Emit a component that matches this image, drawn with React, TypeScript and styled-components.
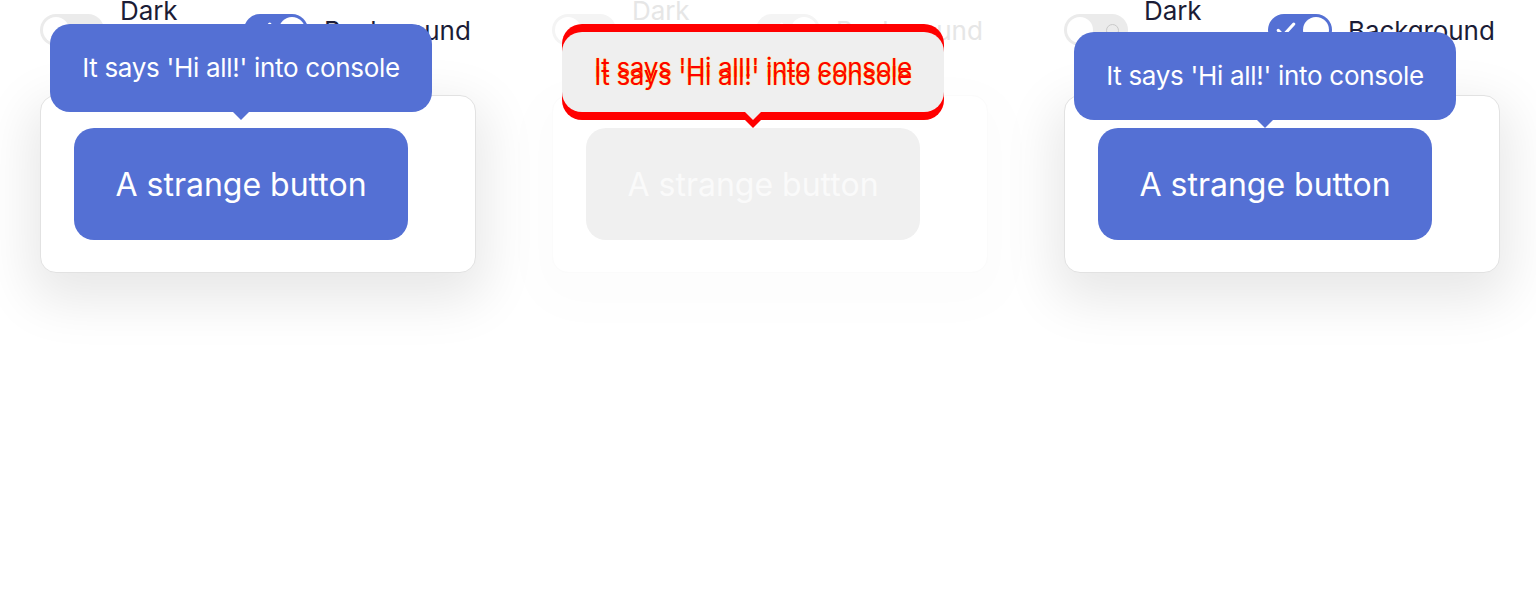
import React from "react";
import styled, { createGlobalStyle, css } from "styled-components";

const GlobalStyle = createGlobalStyle`
  html, body { margin: 0; padding: 0; background: #ffffff; }
  body { font-family: Inter, "Noto Sans", sans-serif; overflow: hidden; }
`;

const BLUE = "#5470d4";

const Page = styled.div`
  display: grid;
  grid-template-columns: repeat(3, 512px);
  width: 1536px;
  height: 600px;
`;

const Column = styled.div`
  position: relative;
  padding: 0 0 0 40px;
`;

const Controls = styled.div`
  display: flex;
  align-items: center;
  gap: 24px;
  margin-top: -9px;
`;

const Control = styled.label`
  display: flex;
  align-items: center;
  gap: 16px;
`;

const Label = styled.span<{ $faded?: boolean; $w?: number }>`
  font-size: 26px;
  line-height: 39px;
  letter-spacing: -0.1px;
  color: ${(p) => (p.$faded ? "#e6e6e6" : "#1b1c36")};
  ${(p) => p.$w && css`width: ${p.$w}px;`}
`;

const Track = styled.span<{ $on?: boolean; $faded?: boolean }>`
  position: relative;
  display: flex;
  align-items: center;
  justify-content: space-between;
  box-sizing: border-box;
  width: 64px;
  height: 32px;
  padding: 0 3px;
  border-radius: 16px;
  flex-shrink: 0;
  background: ${(p) => (p.$faded ? "#f4f4f4" : p.$on ? BLUE : "#ebebeb")};
`;

const Knob = styled.span`
  width: 26px;
  height: 26px;
  border-radius: 50%;
  background: #ffffff;
`;

const Ring = styled.span<{ $faded?: boolean }>`
  width: 11px;
  height: 11px;
  margin-right: 6px;
  border-radius: 50%;
  border: 1.5px solid ${(p) => (p.$faded ? "#ededed" : "#c9c9c9")};
`;

const CheckIcon = styled.svg`
  width: 22px;
  height: 22px;
  margin-left: 4px;
`;

const Switch: React.FC<{ on?: boolean; faded?: boolean }> = ({ on, faded }) => (
  <Track $on={on} $faded={faded}>
    {on ? (
      <>
        <CheckIcon viewBox="0 0 24 24" fill="none">
          <path d="M3.5 12.5l5.5 5.5L20.5 5.5" stroke="#ffffff" strokeWidth="3.4" strokeLinecap="round" strokeLinejoin="round" />
        </CheckIcon>
        <Knob />
      </>
    ) : (
      <>
        <Knob />
        <Ring $faded={faded} />
      </>
    )}
  </Track>
);

const Panel = styled.div<{ $faded?: boolean }>`
  box-sizing: border-box;
  width: 436px;
  margin-top: 26px;
  padding: 32px 33px;
  border-radius: 16px;
  background: #ffffff;
  border: 1px solid ${(p) => (p.$faded ? "#fbfbfb" : "#e2e2e2")};
  box-shadow: ${(p) =>
    p.$faded
      ? "0 16px 48px 24px rgba(0,0,0,0.012)"
      : "0 18px 52px 10px rgba(0,0,0,0.095)"};
`;

const Anchor = styled.div`
  position: relative;
  width: 334px;
`;

const StrangeButton = styled.button<{ $faded?: boolean }>`
  display: flex;
  align-items: center;
  justify-content: center;
  width: 334px;
  height: 112px;
  border: none;
  border-radius: 20px;
  background: ${(p) => (p.$faded ? "#f0f0f0" : BLUE)};
  color: ${(p) => (p.$faded ? "#fafafa" : "#ffffff")};
  font-family: Inter, "Noto Sans", sans-serif;
  font-size: 32px;
  letter-spacing: 0;
  cursor: pointer;
`;

const Tooltip = styled.div<{ $gap: number; $bg?: string; $h?: number }>`
  position: absolute;
  left: 50%;
  bottom: calc(100% + ${(p) => p.$gap}px);
  transform: translateX(-50%);
  box-sizing: border-box;
  width: 382px;
  height: ${(p) => p.$h ?? 88}px;
  border-radius: 20px;
  background: ${(p) => p.$bg ?? BLUE};
  color: #ffffff;
  font-size: 26px;
  line-height: ${(p) => p.$h ?? 88}px;
  text-align: center;
  white-space: nowrap;
  letter-spacing: -0.3px;
  &::after {
    content: "";
    position: absolute;
    left: 50%;
    top: 100%;
    margin-left: -8px;
    border: 8px solid transparent;
    border-top-color: ${(p) => p.$bg ?? BLUE};
    border-bottom: 0;
  }
`;

const DiffText = styled.span<{ $dy: number }>`
  position: absolute;
  left: 0;
  right: 0;
  top: ${(p) => p.$dy}px;
  line-height: 88px;
  color: #ff0000;
  text-shadow: 0 0 1px #ffee00;
`;

const Demo: React.FC<{ gap: number }> = ({ gap }) => (
  <Column>
    <Controls>
      <Control>
        <Switch />
        <Label $w={100}>Dark mode</Label>
      </Control>
      <Control>
        <Switch on />
        <Label>Background</Label>
      </Control>
    </Controls>
    <Panel>
      <Anchor>
        <StrangeButton>A strange button</StrangeButton>
        <Tooltip $gap={gap}>It says 'Hi all!' into console</Tooltip>
      </Anchor>
    </Panel>
  </Column>
);

const DiffDemo: React.FC = () => (
  <Column>
    <Controls>
      <Control>
        <Switch faded />
        <Label $faded $w={100}>Dark mode</Label>
      </Control>
      <Control>
        <Switch on faded />
        <Label $faded>Background</Label>
      </Control>
    </Controls>
    <Panel $faded>
      <Anchor>
        <StrangeButton $faded>A strange button</StrangeButton>
        <Tooltip $gap={8} $bg="#ff0000" $h={96} />
        <Tooltip $gap={16} $bg="#efefef" $h={80}>
          <DiffText $dy={-8}>It says 'Hi all!' into console</DiffText>
          <DiffText $dy={0}>It says 'Hi all!' into console</DiffText>
        </Tooltip>
      </Anchor>
    </Panel>
  </Column>
);

export default function App() {
  return (
    <>
      <GlobalStyle />
      <Page>
        <Demo gap={16} />
        <DiffDemo />
        <Demo gap={8} />
      </Page>
    </>
  );
}
